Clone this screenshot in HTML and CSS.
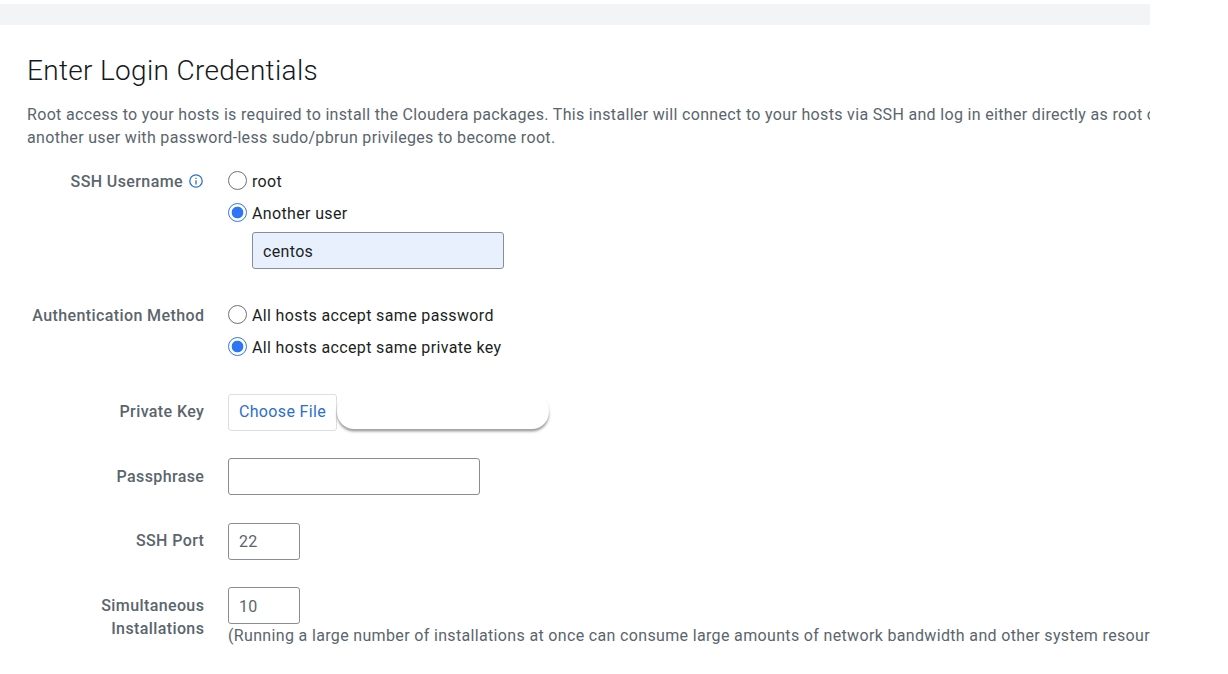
FILE: index.html
```html
<!DOCTYPE html>
<html lang="en">
<head>
<meta charset="utf-8">
<title>Enter Login Credentials</title>
<link rel="stylesheet" href="styles.css">
</head>
<body>
<main class="page">
  <div class="topbar"></div>
  <section class="content">
    <h1 class="title">Enter Login Credentials</h1>
    <p class="intro">Root access to your hosts is required to install the Cloudera packages. This installer will connect to your hosts via SSH and log in either directly as root or<br>another user with password-less sudo/pbrun privileges to become root.</p>
    <form class="form">
      <div class="row row-user">
        <div class="label">SSH Username
          <svg class="info" viewBox="0 0 14 14" width="14" height="14"><circle cx="7" cy="7" r="6.2" fill="none" stroke="#2a6fd0" stroke-width="1.3"/><path d="M7 3.7v1.4M7 6.2v4.3" fill="none" stroke="#2a6fd0" stroke-width="1.3"/></svg>
        </div>
        <div class="field">
          <label class="option"><span class="radio"></span>root</label>
          <label class="option"><span class="radio checked"></span>Another user</label>
          <input class="input filled" type="text" value="centos">
        </div>
      </div>
      <div class="row row-auth">
        <div class="label">Authentication Method</div>
        <div class="field">
          <label class="option"><span class="radio"></span>All hosts accept same password</label>
          <label class="option"><span class="radio checked"></span>All hosts accept same private key</label>
        </div>
      </div>
      <div class="row row-key">
        <div class="label">Private Key</div>
        <div class="field file"><button class="choose" type="button">Choose File</button><span class="filename"></span></div>
      </div>
      <div class="row row-pass">
        <div class="label">Passphrase</div>
        <div class="field"><input class="input" type="text"></div>
      </div>
      <div class="row row-port">
        <div class="label">SSH Port</div>
        <div class="field"><input class="input small" type="text" value="22"></div>
      </div>
      <div class="row row-sim">
        <div class="label">Simultaneous<br>Installations</div>
        <div class="field"><input class="input small" type="text" value="10">
          <div class="hint">(Running a large number of installations at once can consume large amounts of network bandwidth and other system resources)</div>
        </div>
      </div>
    </form>
  </section>
</main>
</body>
</html>
```
FILE: styles.css
```css
* { box-sizing: border-box; }
body { margin: 0; background: #fff; font-family: Roboto, sans-serif; font-size: 16px; line-height: 23px; letter-spacing: 0.342px; color: #5a656d; }
.page { width: 1150px; height: 674px; overflow: hidden; padding-top: 4px; }
.topbar { height: 21px; background: #f3f4f6; }
.content { padding: 28px 0 0 27px; white-space: nowrap; }
.title { margin: 0; font-size: 28px; line-height: 36px; font-weight: 300; color: #15191c; letter-spacing: 0.32px; }
.intro { margin: 14px 0 0; letter-spacing: 0.328px; }
.row { display: grid; grid-template-columns: 177.3px auto; column-gap: 23.7px; align-items: start; }
.row-user { height: 133.5px; padding-top: 21px; }
.row-auth { height: 96px; padding-top: 21px; }
.row-key, .row-pass, .row-port { height: 64.6px; padding-top: 15px; }
.row-sim { padding-top: 15px; }
.label { text-align: right; font-weight: 500; padding-top: 6.7px; letter-spacing: 0.39px; }
.row-user .label, .row-auth .label { padding-top: 0; }
.info { vertical-align: -1px; margin: 0 1px 0 2px; }
.option { display: flex; align-items: center; height: 23px; margin-bottom: 9px; color: #1b1f22; letter-spacing: 0.36px; }
.radio { width: 19px; height: 19px; border: 1px solid #707070; border-radius: 50%; margin: 0 5px 2px 0; background: #fff; }
.radio.checked { border-color: #2f76f6; background: radial-gradient(circle, #2f76f6 5.5px, #fff 6.2px); }
.input { display: block; width: 252px; height: 37px; border: 1px solid #868e94; border-radius: 3px; padding: 0 10px; font: inherit; letter-spacing: inherit; color: #5a656d; background: #fff; }
.filled { margin: -2px 0 0 24px; padding-top: 1px; background: #e8f0fe; color: #1b1f22; }
.small { width: 72px; }
.row-sim .small { padding-top: 1px; }
.file { display: flex; }
.choose { width: 109px; height: 37px; border: 1px solid #dcdfe2; border-radius: 3px; background: #fff; color: #2a6fd0; font: inherit; letter-spacing: inherit; padding: 0 0 1px; }
.filename { width: 212px; height: 35px; border-radius: 17px; background: #fff; box-shadow: 0 2.5px 2.5px rgba(0,0,0,.38); }
```
